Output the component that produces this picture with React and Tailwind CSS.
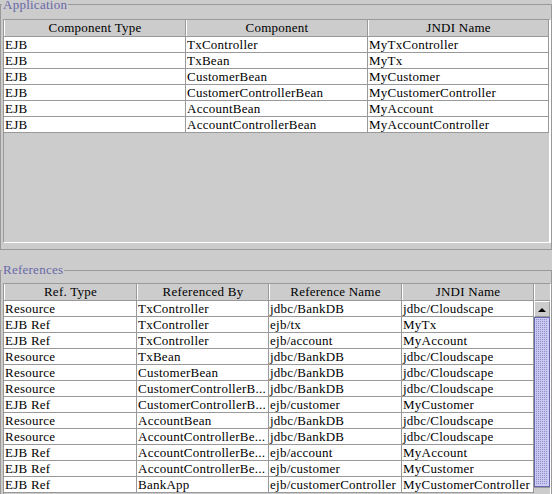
import React from "react";

const appCols = ["w-[182px]", "w-[182px]", "w-[181px]"];
const appHead = ["Component Type", "Component", "JNDI Name"];
const appRows = [
  ["EJB", "TxController", "MyTxController"],
  ["EJB", "TxBean", "MyTx"],
  ["EJB", "CustomerBean", "MyCustomer"],
  ["EJB", "CustomerControllerBean", "MyCustomerController"],
  ["EJB", "AccountBean", "MyAccount"],
  ["EJB", "AccountControllerBean", "MyAccountController"],
];

const refCols = ["w-[133px]", "w-[132px]", "w-[133px]", "w-[132px]"];
const refHead = ["Ref. Type", "Referenced By", "Reference Name", "JNDI Name"];
const refRows = [
  ["Resource", "TxController", "jdbc/BankDB", "jdbc/Cloudscape"],
  ["EJB Ref", "TxController", "ejb/tx", "MyTx"],
  ["EJB Ref", "TxController", "ejb/account", "MyAccount"],
  ["Resource", "TxBean", "jdbc/BankDB", "jdbc/Cloudscape"],
  ["Resource", "CustomerBean", "jdbc/BankDB", "jdbc/Cloudscape"],
  ["Resource", "CustomerControllerB...", "jdbc/BankDB", "jdbc/Cloudscape"],
  ["EJB Ref", "CustomerControllerB...", "ejb/customer", "MyCustomer"],
  ["Resource", "AccountBean", "jdbc/BankDB", "jdbc/Cloudscape"],
  ["Resource", "AccountControllerBe...", "jdbc/BankDB", "jdbc/Cloudscape"],
  ["EJB Ref", "AccountControllerBe...", "ejb/account", "MyAccount"],
  ["EJB Ref", "AccountControllerBe...", "ejb/customer", "MyCustomer"],
  ["EJB Ref", "BankApp", "ejb/customerController", "MyCustomerController"],
];

function TitleRow({ title, textClass = "" }) {
  return (
    <div className="-mt-[7px] flex h-[14px] items-start">
      <div className="mt-[7px] h-px w-[1px] bg-[#999999]" />
      <span className={`px-[1px] text-[13px] leading-[14px] text-[#6868a8] ${textClass}`}>
        {title}
      </span>
      <div className="mt-[7px] h-px flex-1 bg-[#999999]" />
    </div>
  );
}

function Header({ cols, labels }) {
  return (
    <div className="flex h-[17px] border-b border-[#999999] bg-[#cccccc]">
      {labels.map((l, i) => (
        <div
          key={l}
          className={`${cols[i]} h-[16px] shrink-0 overflow-hidden whitespace-nowrap border-r border-l border-r-[#999999] border-l-white text-center leading-[16px]`}
        >
          {l}
        </div>
      ))}
    </div>
  );
}

function Rows({ cols, rows }) {
  return rows.map((r, ri) => (
    <div key={ri} className="flex h-[16px] border-b border-[#999999] bg-white">
      {r.map((c, i) => (
        <div
          key={i}
          className={`${cols[i]} h-[15px] shrink-0 overflow-hidden whitespace-nowrap border-r border-[#999999] pl-[1px] leading-[16px]`}
        >
          {c}
        </div>
      ))}
    </div>
  ));
}

function Thumb() {
  return (
    <svg width="16" height="170" className="block">
      <defs>
        <pattern id="dots" width="2" height="2" patternUnits="userSpaceOnUse">
          <rect width="2" height="2" fill="#c8c8f0" />
          <rect width="1" height="1" fill="#9090c4" />
        </pattern>
      </defs>
      <rect x="0" y="0" width="16" height="170" fill="#ccccff" />
      <rect x="2" y="2" width="12" height="166" fill="url(#dots)" />
      <rect x="0.5" y="0.5" width="15" height="169" fill="none" stroke="#6666aa" />
    </svg>
  );
}

export default function App() {
  return (
    <div className="h-[494px] w-[552px] overflow-hidden bg-[#cccccc] pt-[4px] font-['Liberation_Serif',serif] text-[13px] tracking-[0.25px] text-black">
      <div className="flex flex-col border-x border-b border-[#999999] pb-[6px]">
        <TitleRow title="Application" textClass="mt-[1px]" />
        <div className="ml-[2px] mt-[8px] h-[224px] w-[548px] border-b border-l border-r-2 border-t border-b-white border-l-[#999999] border-r-white border-t-[#999999]">
          <Header cols={appCols} labels={appHead} />
          <Rows cols={appCols} rows={appRows} />
        </div>
      </div>

      <div className="mt-[20px] flex flex-col border-x border-[#999999]">
        <TitleRow title="References" />
        <div className="ml-[2px] mt-[6px] flex w-[548px] border-l border-r border-t border-l-[#999999] border-r-white border-t-[#999999]">
          <div className="w-[530px]">
            <Header cols={refCols} labels={refHead} />
            <Rows cols={refCols} rows={refRows} />
          </div>
          <div className="w-[16px]">
            <div className="h-[17px] border-b border-l border-b-[#999999] border-l-white bg-[#cccccc]" />
            <div className="flex h-[16px] items-center justify-center border border-b-[#999999] border-l-white border-r-[#999999] border-t-white bg-[#cccccc]">
              <svg width="8" height="5" className="block">
                <polygon points="0,5 4,1 8,5" fill="#000" />
              </svg>
            </div>
            <Thumb />
            <div className="h-[20px] border-t border-[#999999] bg-[#cccccc]" />
          </div>
        </div>
      </div>
    </div>
  );
}
